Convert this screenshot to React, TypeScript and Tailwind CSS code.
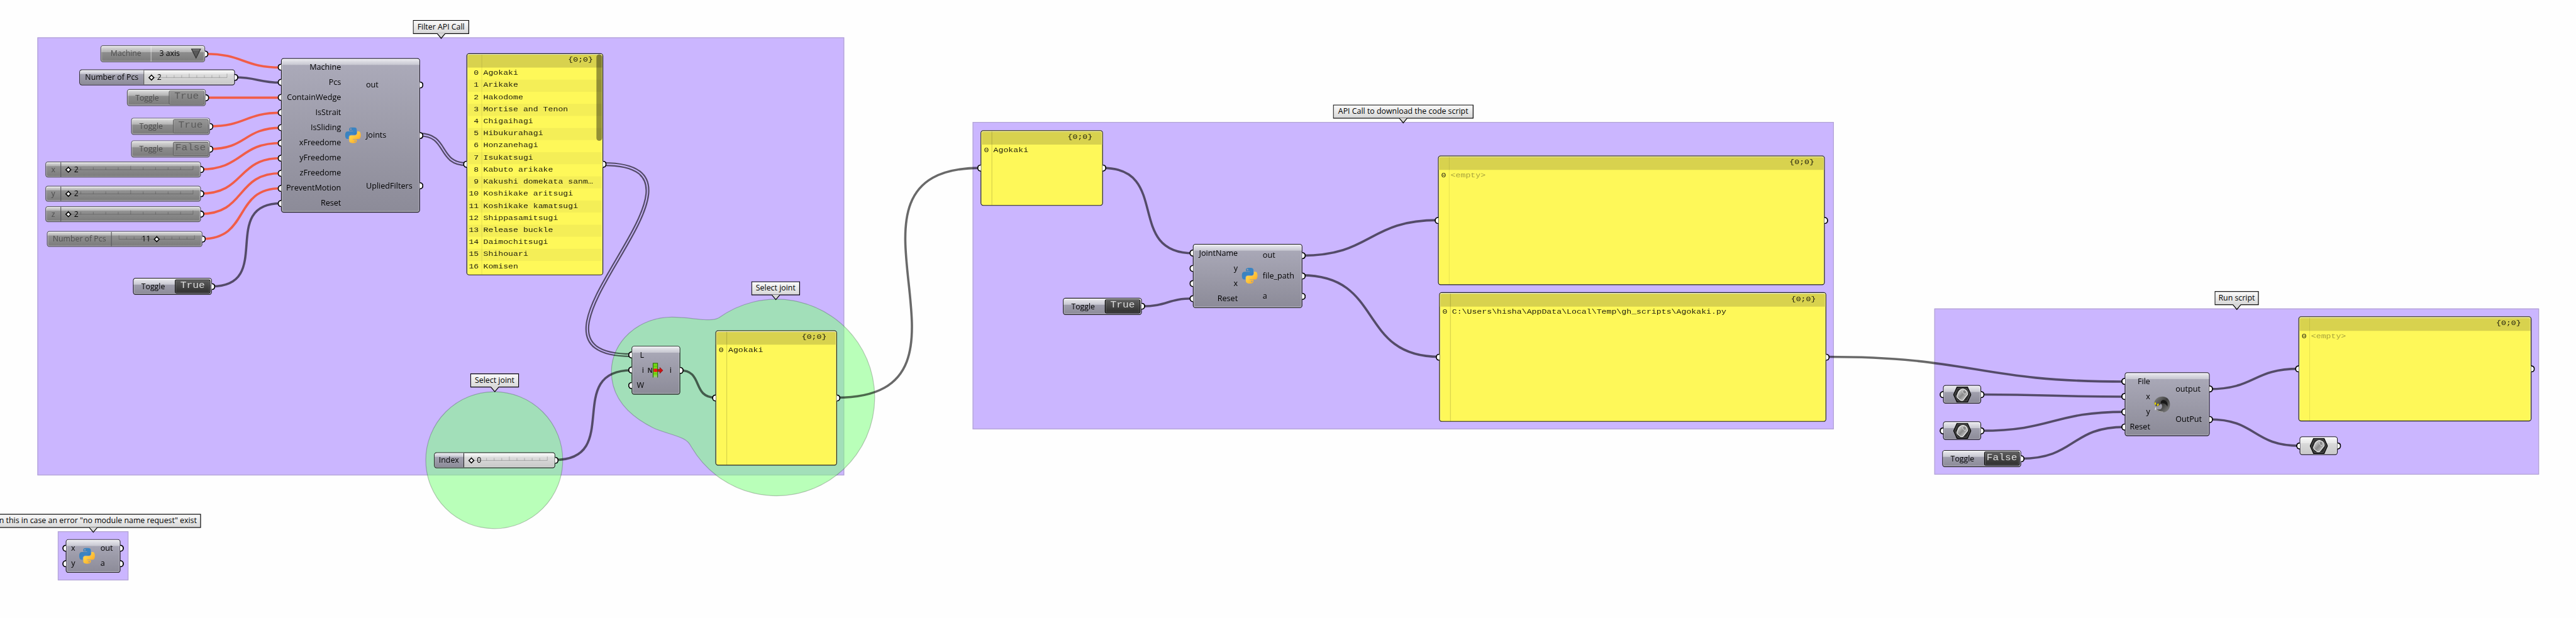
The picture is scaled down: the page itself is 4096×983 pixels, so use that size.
import type { CSSProperties, ReactNode } from "react";

type Rect = { x: number; y: number; x2: number; y2: number };
type Point = [number, number];

const place = (r: Rect): CSSProperties => ({
  left: r.x,
  top: r.y,
  width: r.x2 - r.x,
  height: r.y2 - r.y,
});

const UI_FONT = "font-['Open_Sans','Noto_Sans',sans-serif]";
const MONO_FONT = "font-['Liberation_Mono',monospace]";

/* ---------- shared pieces ---------- */

function Grip({ side }: { side: "in" | "out" }) {
  return side === "in" ? (
    <span className="absolute top-1/2 -left-[11px] h-[19px] w-[10px] -translate-y-1/2 rounded-l-full border-[3.5px] border-r-0 border-black bg-white" />
  ) : (
    <span className="absolute top-1/2 -right-[11px] h-[19px] w-[10px] -translate-y-1/2 rounded-r-full border-[3.5px] border-l-0 border-black bg-white" />
  );
}

type Tone = "normal" | "disabled" | "light";

const BODY: Record<Tone, string> = {
  normal: "border-[#222] bg-linear-to-b from-[#acabba] to-[#8c8b98]",
  disabled: "border-[#5c5c60] bg-linear-to-b from-[#9a9a9a] to-[#7b7b7b]",
  light: "border-[#222] bg-linear-to-b from-[#e4e4e4] to-[#c8c8c8]",
};

const GLOSS: Record<Tone, string> = {
  normal: "bg-linear-to-b from-[#ececf0] to-[#c6c6d0]",
  disabled: "bg-linear-to-b from-[#e0e0e0] to-[#b0b0b0]",
  light: "bg-linear-to-b from-[#fafafa] to-[#e6e6e6]",
};

function Capsule({
  rect,
  tone = "normal",
  gloss = "h-4",
  grips = true,
  inGrip = false,
  children,
}: {
  rect: Rect;
  tone?: Tone;
  gloss?: string;
  grips?: boolean;
  inGrip?: boolean;
  children: ReactNode;
}) {
  return (
    <div
      className={`absolute flex rounded-[7px] border-2 text-[20.5px] leading-none ${UI_FONT} ${BODY[tone]} ${
        tone === "disabled" ? "text-[#4e4e4e]" : "text-black"
      }`}
      style={place(rect)}
    >
      <span className={`absolute inset-x-0 top-0 rounded-t-[5px] ${gloss} ${GLOSS[tone]}`} />
      <span className="absolute inset-0 rounded-[5px] border-2 border-white/30 border-t-white/70" />
      {children}
      {inGrip && <Grip side="in" />}
      {grips && <Grip side="out" />}
    </div>
  );
}

/* ---------- nodes ---------- */

function Toggle({ x, y, value, disabled }: { x: number; y: number; value: string; disabled?: boolean }) {
  return (
    <Capsule rect={{ x, y, x2: x + 209, y2: y + 45 }} tone={disabled ? "disabled" : "normal"}>
      <span className="relative flex flex-1 items-center justify-center pr-1">Toggle</span>
      <span
        className={`relative m-[2px] flex w-[94px] items-center justify-center rounded-[4px] border-[2.5px] pb-[5px] text-[27px] ${MONO_FONT} ${
          disabled
            ? "border-[#5a5a5a] bg-linear-to-b from-[#959595] to-[#7c7c7c] text-[#5a5a5a]"
            : "border-black bg-linear-to-b from-[#5c5c5c] to-[#303030] text-[#dcdcdc]"
        }`}
      >
        <span className="absolute inset-0 border border-white/30" />
        <span className="inline-block scale-y-[0.86]">{value}</span>
      </span>
    </Capsule>
  );
}

function ValueList() {
  return (
    <Capsule rect={{ x: 266, y: 120, x2: 543, y2: 165 }} tone="disabled">
      <span className="relative flex w-[133px] items-center justify-center border-r-2 border-white/50 pb-[2px]">
        Machine
      </span>
      <span className="relative flex flex-1 items-center justify-between pb-[2px] pr-2 pl-[21px] text-black">
        3 axis
        <svg viewBox="0 0 28 28" className="h-7 w-7">
          <path d="M2 2H26L14 26Z" fill="#5a5a5a" stroke="#333" strokeWidth="2" />
          <path d="M5 4H23" stroke="#999" strokeWidth="1.5" />
        </svg>
      </span>
    </Capsule>
  );
}

function Slider({
  rect,
  label,
  labelWidth,
  value,
  valueLeft,
  knob = 0,
  inset = 20,
  span,
  disabled,
}: {
  rect: Rect;
  label: string;
  labelWidth: number;
  value: string;
  valueLeft: number;
  knob?: number;
  inset?: number;
  span: number;
  disabled?: boolean;
}) {
  const tone: Tone = disabled ? "disabled" : "light";
  const knobX = inset + knob * span;
  return (
    <Capsule rect={rect} tone={tone} gloss="h-[10px]">
      <span
        className={`relative flex items-center justify-center border-r-2 pb-[2px] ${
          disabled ? "border-[#5c5c60]" : "rounded-l-[5px] border-[#222] bg-linear-to-b from-[#acabba] to-[#8c8b98]"
        }`}
        style={{ width: labelWidth }}
      >
        {!disabled && <span className="absolute inset-x-0 top-0 h-[10px] rounded-tl-[5px] bg-linear-to-b from-[#ececf0] to-[#c6c6d0]" />}
        <span className="relative">{label}</span>
      </span>
      <span className="relative flex-1">
        <svg className="absolute inset-0 h-full w-full overflow-visible">
          <g stroke="#000" strokeOpacity="0.22" strokeWidth="1.6">
            <path d={`M${inset} 19.5H${inset + span}`} />
            {Array.from({ length: 11 }, (_, i) => (
              <path key={i} d={`M${inset + (span * i) / 10} 19.5V${i % 5 === 0 ? 9 : 13}`} />
            ))}
          </g>
          <path
            d={`M${knobX} 13L${knobX + 6.5} 19.5L${knobX} 26L${knobX - 6.5} 19.5Z`}
            fill="#fff"
            stroke="#000"
            strokeWidth="2.6"
          />
        </svg>
        <span
          className="absolute inset-y-0 flex items-center pb-[2px] text-black"
          style={{ left: valueLeft }}
        >
          {value}
        </span>
      </span>
    </Capsule>
  );
}

function Component({
  rect,
  inputs,
  outputs,
  inputWidth,
  outputPad,
  icon,
}: {
  rect: Rect;
  inputs: string[];
  outputs: string[];
  inputWidth: number;
  outputPad: number;
  icon: ReactNode;
}) {
  return (
    <Capsule rect={rect} grips={false}>
      <div className="flex flex-col py-[2px]" style={{ width: inputWidth }}>
        {inputs.map((name) => (
          <div key={name} className="relative flex flex-1 items-center justify-end">
            <Grip side="in" />
            <span className="pb-[2px] text-[21px]">{name}</span>
          </div>
        ))}
      </div>
      <div className="relative flex w-[62px] items-center justify-center">{icon}</div>
      <div className="flex flex-1 flex-col py-[2px]">
        {outputs.map((name) => (
          <div key={name} className="relative flex flex-1 items-center" style={{ paddingLeft: outputPad }}>
            <span className="pb-[2px] text-[21px]">{name}</span>
            <Grip side="out" />
          </div>
        ))}
      </div>
    </Capsule>
  );
}

function Panel({
  rect,
  rows,
  faint,
  indexWidth = 27,
  scrollbar,
}: {
  rect: Rect;
  rows: string[];
  faint?: boolean;
  indexWidth?: number;
  scrollbar?: boolean;
}) {
  return (
    <div
      className={`absolute flex flex-col rounded-[7px] border-2 border-[#222] bg-[#fef859] text-[22px] leading-none text-[#1c1b0c] ${MONO_FONT}`}
      style={place(rect)}
    >
      <div className="flex h-[36px] shrink-0 items-center justify-end rounded-t-[5px] bg-[#d8d24e] pr-[25px] pb-[3px]">
        <span className="inline-block scale-y-[0.87]">{"{0;0}"}</span>
      </div>
      {rows.map((text, i) => (
        <div key={text} className={`flex h-8 shrink-0 items-center pb-[2px] ${i % 2 ? "bg-[#f4ee57]" : ""}`}>
          <span className="scale-y-[0.87] pr-[7px] text-right" style={{ width: indexWidth }}>
            {i}
          </span>
          <span className={`scale-y-[0.87] pl-[5px] whitespace-pre ${faint ? "text-[#a8a33c]" : ""}`}>{text}</span>
        </div>
      ))}
      <span className="absolute inset-y-0 w-[1.5px] bg-black/15" style={{ left: indexWidth }} />
      <span className="absolute inset-0 rounded-[5px] border-2 border-white/30 border-t-white/80 border-b-transparent" />
      {scrollbar && <span className="absolute top-[1px] right-[1px] h-[229px] w-[15px] rounded-full bg-black/40" />}
      <Grip side="in" />
      <Grip side="out" />
    </div>
  );
}

function Group({ rect }: { rect: Rect }) {
  return <div className="absolute border-2 border-[#b2a4d3] bg-[#cbb6ff]" style={place(rect)} />;
}

function Tag({ rect, text, end }: { rect: Rect; text: string; end?: boolean }) {
  return (
    <div
      className={`absolute flex items-center border-2 border-black bg-linear-to-b from-[#fafafa] to-[#d8d8d8] pb-[2px] text-[20.6px] leading-none whitespace-nowrap text-black ${UI_FONT} ${
        end ? "justify-end pr-[9px]" : "justify-center"
      }`}
      style={place(rect)}
    >
      {text}
      <svg viewBox="0 0 24 16" className="absolute top-full left-1/2 h-4 w-6 -translate-x-1/2">
        <path d="M1 0H23L12 13.5Z" fill="#d8d8d8" />
        <path d="M1.5 1L12 13.5L22.5 1" fill="none" stroke="#000" strokeWidth="2" />
      </svg>
    </div>
  );
}

/* ---------- icons ---------- */

function PythonIcon() {
  return (
    <svg viewBox="12 12 104 106" className="h-[43px] w-[43px]">
      <defs>
        <linearGradient id="py-blue" x1="0" y1="0" x2="1" y2="1">
          <stop offset="0" stopColor="#3a7fb5" />
          <stop offset="0.6" stopColor="#3a85c6" />
          <stop offset="1" stopColor="#2f6da3" />
        </linearGradient>
        <linearGradient id="py-gold" x1="0" y1="0" x2="1" y2="1">
          <stop offset="0.1" stopColor="#ffe052" />
          <stop offset="1" stopColor="#ff9f1c" />
        </linearGradient>
      </defs>
      <g transform="translate(0 10.26)">
        <path
          fill="url(#py-blue)"
          d="M63.391 1.988c-4.222.02-8.252.379-11.8 1.007-10.45 1.846-12.346 5.71-12.346 12.837v9.411h24.693v3.137H29.977c-7.176 0-13.46 4.313-15.426 12.521-2.268 9.405-2.368 15.275 0 25.096 1.755 7.311 5.947 12.519 13.124 12.519h8.491V67.234c0-8.151 7.051-15.34 15.426-15.34h24.665c6.866 0 12.346-5.654 12.346-12.548V15.833c0-6.693-5.646-11.72-12.346-12.837-4.244-.706-8.645-1.027-12.866-1.008zM50.037 9.557c2.55 0 4.634 2.117 4.634 4.721 0 2.593-2.083 4.69-4.634 4.69-2.56 0-4.633-2.097-4.633-4.69-.001-2.604 2.073-4.721 4.633-4.721z"
        />
        <path
          fill="url(#py-gold)"
          d="M91.682 28.38v10.966c0 8.5-7.208 15.655-15.426 15.655H51.591c-6.756 0-12.346 5.783-12.346 12.549v23.515c0 6.691 5.818 10.628 12.346 12.547 7.816 2.297 15.312 2.713 24.665 0 6.216-1.801 12.346-5.423 12.346-12.547v-9.412H63.938v-3.138h37.012c7.176 0 9.852-5.005 12.348-12.519 2.578-7.735 2.467-15.174 0-25.096-1.774-7.145-5.161-12.521-12.348-12.521h-9.268zM77.809 87.927c2.561 0 4.634 2.097 4.634 4.692 0 2.602-2.074 4.719-4.634 4.719-2.55 0-4.633-2.117-4.633-4.719 0-2.595 2.083-4.692 4.633-4.692z"
        />
      </g>
    </svg>
  );
}

function ListItemIcon() {
  return (
    <span className="relative flex h-11 w-11 items-center">
      <span className="text-[17px] font-bold text-[#222]">N</span>
      <svg viewBox="0 0 44 44" className="absolute inset-0 h-11 w-11">
        <defs>
          <linearGradient id="bar-green" x1="0" y1="0" x2="0" y2="1">
            <stop offset="0" stopColor="#6fd616" />
            <stop offset="0.8" stopColor="#7be01c" />
            <stop offset="1" stopColor="#a8e070" stopOpacity="0.4" />
          </linearGradient>
        </defs>
        <path d="M15 41V3H27V41" fill="url(#bar-green)" stroke="#2c6b0c" strokeWidth="1.8" />
        <path d="M15 11H27M15 31H27" stroke="#4da010" strokeWidth="1" />
        <rect x="16.5" y="17.5" width="9.5" height="8.5" fill="#f21212" />
        <path d="M28 19H33V14L41 22L33 30V25H28Z" fill="#cc1111" stroke="#7a0606" strokeWidth="1" />
      </svg>
    </span>
  );
}

function SnakeIcon() {
  return (
    <svg viewBox="0 0 44 44" className="h-[44px] w-[44px]">
      <defs>
        <linearGradient id="snake" x1="0" y1="0" x2="1" y2="1">
          <stop offset="0" stopColor="#8b8b8b" />
          <stop offset="0.5" stopColor="#3c3c3c" />
          <stop offset="1" stopColor="#8e8e8e" />
        </linearGradient>
      </defs>
      <path
        d="M1 20C2 8 11 1 23 1C35 1 43 10 43 22C43 35 35 43 23 43C14 43 8 40 5 35C12 36 22 37 22 27C22 22 20 20 17 22C12 27 6 31 1 20Z"
        fill="url(#snake)"
      />
      <path d="M19 20C17 13 22 9 29 11C36 14 38 20 36 28C32 20 26 18 19 20Z" fill="#111" opacity="0.85" />
      <path d="M5 33C8 39 16 42 25 42" fill="none" stroke="#b5b5b5" strokeWidth="2" />
      <ellipse cx="4" cy="20" rx="2.2" ry="3.4" fill="#e8d600" />
      <ellipse cx="11" cy="23" rx="2.2" ry="3.4" fill="#e8d600" transform="rotate(20 11 23)" />
      <path d="M5 30L4 37" stroke="#eee" strokeWidth="2" />
    </svg>
  );
}

function ParamIcon() {
  return (
    <svg viewBox="0 0 48 42" className="h-[42px] w-[48px]">
      <defs>
        <linearGradient id="blob" x1="0" y1="0" x2="1" y2="1">
          <stop offset="0" stopColor="#f4f4f4" />
          <stop offset="0.5" stopColor="#8a8a8a" />
          <stop offset="1" stopColor="#e4e4e4" />
        </linearGradient>
      </defs>
      <path d="M10 1H38L47 21L38 41H10L1 21Z" fill="#2c2c2c" stroke="#0a0a0a" strokeWidth="2" />
      <path d="M12 4H36L44 21L36 38H12L4 21Z" fill="none" stroke="#5a5a5a" strokeWidth="1.5" />
      <path
        d="M14 14C17 8 24 5 29 7C36 9 39 15 38 21L27 35C24 38 20 37 17 34C11 30 9 27 10 24Z"
        fill="url(#blob)"
        stroke="#f4f4f4"
        strokeWidth="1.8"
      />
      <ellipse cx="30" cy="14" rx="4.5" ry="6" fill="#8a8a8a" stroke="#eee" strokeWidth="1.2" transform="rotate(-30 30 14)" />
    </svg>
  );
}

/* ---------- wires ---------- */

function wirePath([x0, y0]: Point, [x1, y1]: Point) {
  const dist = Math.hypot(x1 - x0, y1 - y0);
  const rise = Math.abs(y1 - y0) / dist;
  const k = dist * (0.5 + 0.24 * rise ** 4);
  return `M${x0} ${y0}C${x0 + k} ${y0} ${x1 - k} ${y1} ${x1} ${y1}`;
}

const EMPTY_WIRES: [Point, Point][] = [
  [[543, 142.7], [744, 178.7]],
  [[545, 258.7], [744, 258.7]],
  [[555, 334.5], [744, 298.7]],
  [[555, 394.5], [744, 338.7]],
  [[531, 448.5], [744, 378.7]],
  [[531, 512.7], [744, 418.7]],
  [[531, 566.5], [744, 458.7]],
  [[535, 632.7], [744, 498.7]],
];

const ITEM_WIRES: [Point, Point][] = [
  [[621, 204.7], [744, 218.7]],
  [[561, 758.5], [744, 538.7]],
  [[1469, 1218], [1672, 980.6]],
  [[1800, 980.6], [1894, 1053]],
  [[2215, 1053], [2596, 444.7]],
  [[2919, 444.7], [3159, 670.5]],
  [[3023, 811], [3159, 790.5]],
  [[3447, 677], [3807, 583]],
  [[3447, 729], [3811, 945]],
  [[4834, 945], [5625, 1010.7]],
  [[5245, 1044.7], [5625, 1050.7]],
  [[5245, 1140.7], [5625, 1090.7]],
  [[5351, 1214.7], [5625, 1130.7]],
  [[5849, 1030.5], [6085, 976.7]],
  [[5849, 1110.5], [6088, 1180.7]],
];

const LIST_WIRES: [Point, Point][] = [
  [[1111, 356.7], [1235, 434.6]],
  [[1597, 434.6], [1672, 940.6]],
];

function Wires() {
  return (
    <svg viewBox="0 0 6820 1636" className="absolute inset-0 h-[1636px] w-[6820px]" fill="none">
      <defs>
        <mask id="double" maskUnits="userSpaceOnUse" x="0" y="0" width="6820" height="1636">
          <rect width="6820" height="1636" fill="#fff" />
          {LIST_WIRES.map(([a, b], i) => (
            <path key={i} d={wirePath(a, b)} stroke="#000" strokeWidth="3" />
          ))}
        </mask>
      </defs>
      <g fill="#82ff82" fillOpacity="0.56" stroke="#000" strokeOpacity="0.22" strokeWidth="2">
        <circle cx="1308.5" cy="1218.7" r="181.3" />
        <path d="M1903 841.8A260.3 260.3 0 1 1 1831 1184.6C1824 1171 1818 1166 1808 1161.5C1783 1150 1755 1145 1729 1133C1663 1100 1618.7 1051 1618.7 984C1618.7 905 1690 840 1779 839.8C1823 840 1845 847 1878.4 847C1888 847 1895 846 1903 841.8Z" />
      </g>
      <g stroke="#f15d48" strokeWidth="6">
        {EMPTY_WIRES.map(([a, b], i) => (
          <path key={i} d={wirePath(a, b)} />
        ))}
      </g>
      <g stroke="#000" strokeOpacity="0.59" strokeWidth="6">
        {ITEM_WIRES.map(([a, b], i) => (
          <path key={i} d={wirePath(a, b)} />
        ))}
      </g>
      <g stroke="#000" strokeOpacity="0.59" strokeWidth="10.4" mask="url(#double)">
        {LIST_WIRES.map(([a, b], i) => (
          <path key={i} d={wirePath(a, b)} />
        ))}
      </g>
    </svg>
  );
}

/* ---------- document ---------- */

const GROUPS: Rect[] = [
  { x: 99, y: 99, x2: 2235, y2: 1259 },
  { x: 2575, y: 323, x2: 4855, y2: 1137 },
  { x: 5121, y: 817, x2: 6722, y2: 1257 },
  { x: 153, y: 1407, x2: 340, y2: 1537 },
];

const TAGS: { rect: Rect; text: string; end?: boolean }[] = [
  { rect: { x: 1093, y: 53, x2: 1242, y2: 90 }, text: "Filter API Call" },
  { rect: { x: 1245, y: 989, x2: 1374, y2: 1026 }, text: "Select joint" },
  { rect: { x: 1989, y: 745, x2: 2118, y2: 782 }, text: "Select joint" },
  { rect: { x: 3529, y: 277, x2: 3901, y2: 314 }, text: "API Call to download the code script" },
  { rect: { x: 5863, y: 771, x2: 5980, y2: 808 }, text: "Run script" },
  { rect: { x: -39, y: 1361, x2: 532, y2: 1398 }, text: 'n this in case an error "no module name request" exist', end: true },
];

const JOINTS = [
  "Agokaki",
  "Arikake",
  "Hakodome",
  "Mortise and Tenon",
  "Chigaihagi",
  "Hibukurahagi",
  "Honzanehagi",
  "Isukatsugi",
  "Kabuto arikake",
  "Kakushi domekata sanm…",
  "Koshikake aritsugi",
  "Koshikake kamatsugi",
  "Shippasamitsugi",
  "Release buckle",
  "Daimochitsugi",
  "Shihouari",
  "Komisen",
];

function Param({ x, y, tone }: { x: number; y: number; tone?: Tone }) {
  return (
    <Capsule rect={{ x, y, x2: x + 101, y2: y + 49 }} tone={tone} inGrip>
      <span className="relative flex flex-1 items-center justify-center">
        <ParamIcon />
      </span>
    </Capsule>
  );
}

export default function App() {
  return (
    <main className="relative h-[983px] w-[4096px] overflow-hidden bg-[#fefefe]">
      <div className="absolute top-0 left-0 h-[1636px] w-[6820px] origin-top-left scale-[0.6006]">
        {GROUPS.map((rect) => (
          <Group key={rect.x} rect={rect} />
        ))}
        <Wires />
        {TAGS.map((tag) => (
          <Tag key={tag.rect.x} {...tag} />
        ))}

        <ValueList />
        <Slider
          rect={{ x: 210, y: 183.5, x2: 621.5, y2: 225.5 }}
          label="Number of Pcs"
          labelWidth={170}
          value="2"
          valueLeft={34}
          inset={19}
          span={200}
        />
        <Toggle x={336} y={236} value="True" disabled />
        <Toggle x={346.5} y={312} value="True" disabled />
        <Toggle x={346.5} y={372} value="False" disabled />
        <Slider rect={{ x: 120, y: 428, x2: 531.5, y2: 469.5 }} label="x" labelWidth={40} value="2" valueLeft={34} inset={19} span={330} disabled />
        <Slider rect={{ x: 120, y: 492, x2: 531.5, y2: 533.5 }} label="y" labelWidth={40} value="2" valueLeft={34} inset={19} span={330} disabled />
        <Slider rect={{ x: 120, y: 546, x2: 531.5, y2: 587.5 }} label="z" labelWidth={40} value="2" valueLeft={34} inset={19} span={330} disabled />
        <Slider
          rect={{ x: 124, y: 612, x2: 535.5, y2: 653.5 }}
          label="Number of Pcs"
          labelWidth={170}
          value="11"
          valueLeft={79}
          knob={0.5}
          inset={19}
          span={200}
          disabled
        />
        <Toggle x={352} y={736} value="True" />
        <Component
          rect={{ x: 744, y: 154, x2: 1111.5, y2: 563 }}
          inputs={["Machine", "Pcs", "ContainWedge", "IsStrait", "IsSliding", "xFreedome", "yFreedome", "zFreedome", "PreventMotion", "Reset"]}
          outputs={["out", "Joints", "UpliedFilters"]}
          inputWidth={157}
          outputPad={4}
          icon={<PythonIcon />}
        />
        <Panel rect={{ x: 1234.5, y: 140.5, x2: 1597, y2: 729 }} rows={JOINTS} indexWidth={38} scrollbar />
        <Slider
          rect={{ x: 1148.5, y: 1198, x2: 1469.5, y2: 1239.5 }}
          label="Index"
          labelWidth={78}
          value="0"
          valueLeft={34}
          inset={19}
          span={201}
        />
        <Component
          rect={{ x: 1672, y: 916, x2: 1800.5, y2: 1045 }}
          inputs={["L", "i", "W"]}
          outputs={["i"]}
          inputWidth={31}
          outputPad={6}
          icon={<ListItemIcon />}
        />
        <Panel rect={{ x: 1894, y: 874.5, x2: 2215.5, y2: 1233 }} rows={["Agokaki"]} />

        <Panel rect={{ x: 2596, y: 344.5, x2: 2919.5, y2: 545 }} rows={["Agokaki"]} />
        <Toggle x={2814} y={788.5} value="True" />
        <Component
          rect={{ x: 3158, y: 646, x2: 3447.5, y2: 815.5 }}
          inputs={["JointName", "y", "x", "Reset"]}
          outputs={["out", "file_path", "a"]}
          inputWidth={117}
          outputPad={4}
          icon={<PythonIcon />}
        />
        <Panel rect={{ x: 3806.5, y: 412, x2: 4830.5, y2: 755 }} rows={["<empty>"]} faint />
        <Panel
          rect={{ x: 3810, y: 774, x2: 4834.5, y2: 1117 }}
          rows={["C:\\Users\\hisha\\AppData\\Local\\Temp\\gh_scripts\\Agokaki.py"]}
        />

        <Param x={5144} y={1020} />
        <Param x={5144} y={1116} />
        <Toggle x={5142} y={1192} value="False" />
        <Component
          rect={{ x: 5624.5, y: 986, x2: 5849.5, y2: 1155 }}
          inputs={["File", "x", "y", "Reset"]}
          outputs={["output", "OutPut"]}
          inputWidth={66}
          outputPad={5}
          icon={<SnakeIcon />}
        />
        <Panel rect={{ x: 6084.5, y: 838, x2: 6701.5, y2: 1115.5 }} rows={["<empty>"]} faint />
        <Param x={6088} y={1156} tone="light" />

        <Component
          rect={{ x: 174, y: 1428, x2: 319, y2: 1517 }}
          inputs={["x", "y"]}
          outputs={["out", "a"]}
          inputWidth={23}
          outputPad={5}
          icon={<PythonIcon />}
        />
      </div>
    </main>
  );
}
